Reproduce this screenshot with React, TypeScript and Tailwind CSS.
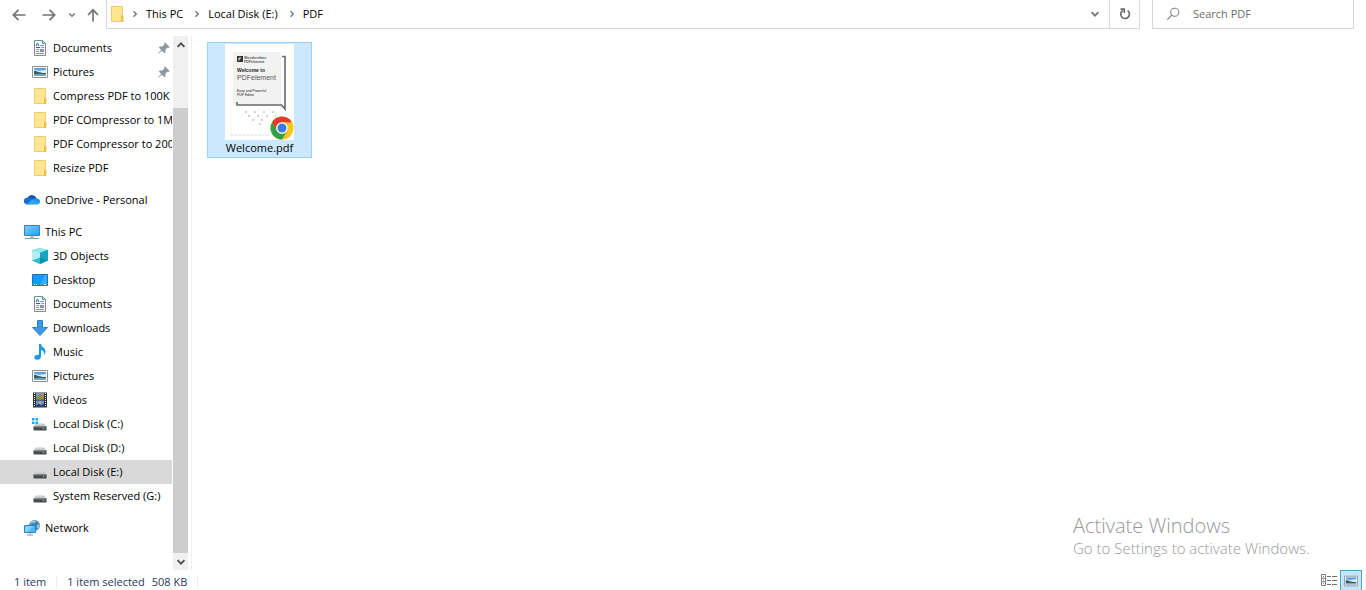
import React from "react";

type IconProps = { className?: string };

const Svg = ({ children, className = "size-4" }: { children: React.ReactNode; className?: string }) => (
  <svg viewBox="0 0 16 16" className={`shrink-0 ${className}`} aria-hidden="true">
    {children}
  </svg>
);

const FolderIcon = ({ className }: IconProps) => (
  <Svg className={className}>
    <path d="M2.500.5h11v15h-11z" fill="#fee591" stroke="#eccd74" />
    <path d="M12.500 15.500v-5c0-.8.3-1 .7-1s.8.2.8 1v5z" fill="#fbdc76" stroke="#e2b94c" />
  </Svg>
);

const DocumentIcon = () => (
  <Svg>
    <path d="M2.500.5h8l3 3v12h-11z" fill="#fcfdfd" stroke="#7f8b91" />
    <path d="M10.500.5v3h3" fill="none" stroke="#7f8b91" />
    <path d="M4 6l1.500-3L7 6M4 7.500h4" fill="none" stroke="#1f6f9c" />
    <path d="M8 5.500h4M9 7.500h3M4 9.500h3M4 11.500h3M4 13.500h8" fill="none" stroke="#4ab0d8" />
    <path d="M8 9h4v3H8z" fill="#5aa5c8" />
  </Svg>
);

const PictureIcon = ({ className }: IconProps) => (
  <Svg className={className}>
    <path d="M.5 2.500h15v11H.5z" fill="#fff" stroke="#8b9094" />
    <path d="M2 4h12v8H2z" fill="#9fcdf5" />
    <path d="M2 4h12v2L7 6.500 2 5z" fill="#5a9fe4" />
    <path d="M6 7l8-1v3H7z" fill="#d8edfb" />
    <path d="M2 7c3 0 5 2 12 2v1.500H2z" fill="#37635f" />
    <path d="M2 10.500h12V12H2z" fill="#77a7b6" />
  </Svg>
);

const CloudIcon = () => (
  <Svg className="h-4 w-4">
    <path d="M4 12.500a3.500 3.500 0 0 1-.5-6.800A5 5 0 0 1 12.600 6.500L8 12z" fill="#0d56ae" />
    <path d="M3.200 5.800c2-.7 4 .1 5.600 1.300L3 12.400A3.300 3.300 0 0 1 3.200 5.800z" fill="#1471cb" />
    <path d="M8.300 7.200c2-1.500 4.200-1 4.500-.6A3 3 0 0 1 15.600 11z" fill="#168ee2" />
    <path d="M2 12.200L8.200 7.200 15.600 10.500c0 1-.9 2-2.300 2H4c-.8 0-1.400 0-2-.3z" fill="#28a5ec" />
  </Svg>
);

const ComputerIcon = () => (
  <Svg>
    <defs>
      <linearGradient id="screen" x1="0" y1="0" x2="1" y2="1">
        <stop offset="0" stopColor="#82ceff" />
        <stop offset="1" stopColor="#269bf3" />
      </linearGradient>
    </defs>
    <path d="M.5 1.500h15v10H.5z" fill="url(#screen)" stroke="#3a83b6" />
    <path d="M6 12h4v2H6z" fill="#b7c8d1" />
    <path d="M1 14.500h14" stroke="#8399a6" />
  </Svg>
);

const CubeIcon = () => (
  <Svg>
    <path d="M8 0l8 2v10.500L8 16l-8-3.500V2z" fill="#56d4df" />
    <path d="M8 0l8 2-8 3-8-3z" fill="#8feaf0" />
    <path d="M0 2l8 3v5l-8 2.500z" fill="#b3eff0" />
    <path d="M0 12.500L8 9.500V16z" fill="#2fbccf" />
    <path d="M8 5l8-3v10.500L8 16z" fill="#0b8fab" />
    <path d="M8 5l8-3v10.500L8 9.500z" fill="#17a5c2" />
  </Svg>
);

const DesktopIcon = () => (
  <Svg>
    <path d="M.5 2.500h15v11H.5z" fill="#1799f8" stroke="#1174c4" />
    <path d="M8 13L13 3h2v10z" fill="#36adff" />
    <path d="M2 12.500h1M4 12.500h1M12 12.500h2" stroke="#d9f0ff" />
  </Svg>
);

const DownloadIcon = () => (
  <Svg>
    <path d="M5.500.5h5v7h5L8 15.500.5 7.500h5z" fill="#3d96e4" stroke="#2c7fcb" strokeLinejoin="round" />
  </Svg>
);

const MusicIcon = () => (
  <Svg>
    <path d="M7 0h2c.2 3 4.500 3.500 4.500 7.500 0 1.500-.7 2.800-1.500 3.500.6-3-.8-4.500-3-5v6.500c0 2-1.700 3.300-3.700 3.300S2.300 14.800 2.300 13.500c0-1.900 2.200-3.300 4.700-2.700z" fill="#1b97e3" />
  </Svg>
);

const VideoIcon = () => (
  <Svg>
    <path d="M1 .5h14v15H1z" fill="#30302f" />
    <path d="M4 1h8v6.500H4z" fill="#6ba0d0" />
    <path d="M4 8.500h8V15H4z" fill="#5b97e6" />
    <path d="M4 5.500l3-2 2 2 3-2v4H4z" fill="#7b9a36" />
    <path d="M7 2h3v3H7z" fill="#e2683c" />
    <path d="M4 13.500l3-2 2 2 3-2V15H4z" fill="#294568" />
    <path d="M7 9h2v3H7z" fill="#e5a64a" />
    <path d="M2.500 1v14M13.500 1v14" stroke="#fff" strokeDasharray="1 1" />
  </Svg>
);

const DiskBody = () => (
  <>
    <path d="M3.500 7.500h9l2 3.500h-13z" fill="#c9cccd" />
    <path d="M1.500 10.500h13v4h-13z" fill="#454a4c" />
    <path d="M1.500 10.500h13v1h-13z" fill="#777c7e" />
    <path d="M11 12.500h1" stroke="#8cf08e" />
  </>
);

const DiskIcon = () => (
  <Svg>
    <DiskBody />
  </Svg>
);

const SystemDiskIcon = () => (
  <Svg>
    <DiskBody />
    <path d="M0 2h2.500v2.500H0zM3.500 2H6v2.500H3.500zM0 5.500h2.500V8H0zM3.500 5.500H6V8H3.500z" fill="#19aeea" />
  </Svg>
);

const NetworkIcon = () => (
  <Svg>
    <circle cx="10.500" cy="5.500" r="5.400" fill="#3f86b4" />
    <path d="M6.500 2.500c1.500-2 4-2.300 5.500-1.500l-1.500 2-2.500-.2-1 1.700zM13 5l2.500-.5c.1 2.500-1 4-2.500 4.500z" fill="#9bcbe0" />
    <path d="M.5 5.500h11v7H.5z" fill="#50b5f5" stroke="#2d82bd" />
    <path d="M1 6h8l-5 6H1z" fill="#83d0fc" />
    <path d="M6 13v1.500M3 15h6" stroke="#7799ab" />
  </Svg>
);

const PinIcon = () => (
  <Svg className="size-3">
    <path d="M9.500.5l6 6-1.600 1.500-1.400-.4-2.700 2.700.3 3.200-1.500 1.400-3.300-3.300L1 15.300l-.6-.6 3.900-4.100L1 7.300l1.500-1.400 3.200.2 2.600-2.600L8 2z" fill="#8e979e" />
  </Svg>
);

const BackIcon = () => (
  <Svg>
    <path d="M14.500 8H2.500M7.500 2.800L2.300 8l5.200 5.200" fill="none" stroke="#747474" strokeWidth="1.700" />
  </Svg>
);

const ForwardIcon = () => (
  <Svg>
    <path d="M1.500 8h12M8.500 2.800L13.700 8l-5.200 5.200" fill="none" stroke="#747474" strokeWidth="1.700" />
  </Svg>
);

const UpIcon = () => (
  <Svg>
    <path d="M8 14.500V3M3 8l5-5.200L13 8" fill="none" stroke="#747474" strokeWidth="1.700" />
  </Svg>
);

const ChevronDown = ({ className }: IconProps) => (
  <Svg className={className}>
    <path d="M2.500 5L8 10.500 13.500 5" fill="none" stroke="currentColor" strokeWidth="3" />
  </Svg>
);

const ChevronUp = ({ className }: IconProps) => (
  <Svg className={className}>
    <path d="M2.500 11L8 5.500 13.500 11" fill="none" stroke="currentColor" strokeWidth="3" />
  </Svg>
);

const ChevronRight = () => (
  <Svg className="size-2 text-[#777]">
    <path d="M5 2.500L10.500 8 5 13.500" fill="none" stroke="currentColor" strokeWidth="2.800" />
  </Svg>
);

const RefreshIcon = () => (
  <Svg className="size-3">
    <path d="M11.500 3.500A5.800 5.800 0 1 1 5 3.300" fill="none" stroke="#6b6b6b" strokeWidth="2.200" />
    <path d="M2 1.500h5v5" fill="none" stroke="#6b6b6b" strokeWidth="2.200" />
  </Svg>
);

const SearchIcon = () => (
  <Svg className="size-[14px]">
    <circle cx="10" cy="6" r="4.600" fill="none" stroke="#777" strokeWidth="1.100" />
    <path d="M6.700 9.300L1.500 14.500" stroke="#777" strokeWidth="1.200" />
  </Svg>
);

const ChromeIcon = () => (
  <svg viewBox="0 0 48 48" className="absolute right-0 bottom-0 size-6" aria-hidden="true">
    <circle cx="24" cy="24" r="23" fill="#f8c61b" />
    <path d="M4.100 12.500A23 23 0 0 1 43.900 12.500H24A11.500 11.500 0 0 0 14 29.800z" fill="#e33b2e" />
    <path d="M4.100 12.500L14 29.800A11.500 11.500 0 0 0 34 29.800L24 47A23 23 0 0 1 4.100 12.500z" fill="#2da14c" />
    <circle cx="24" cy="24" r="11.500" fill="#fff" />
    <circle cx="24" cy="24" r="9" fill="#3a7bea" />
  </svg>
);

const DetailsViewIcon = () => (
  <Svg className="size-4">
    <path d="M.5 2.500h4v11h-4zM.5 6.200h4M.5 9.800h4" fill="none" stroke="#808080" />
    <path d="M2 4.500h1M2 8h1M2 11.700h1M6 4.500h4M11 4.500h5M6 8.500h4M11 8.500h5M6 12.500h4M11 12.500h5" stroke="#6f6f6f" />
  </Svg>
);

type Entry = { label: string; icon: React.ReactNode; pinned?: boolean; root?: boolean; selected?: boolean };

const groups: Entry[][] = [
  [
    { label: "Documents", icon: <DocumentIcon />, pinned: true },
    { label: "Pictures", icon: <PictureIcon />, pinned: true },
    { label: "Compress PDF to 100K", icon: <FolderIcon /> },
    { label: "PDF COmpressor to 1M", icon: <FolderIcon /> },
    { label: "PDF Compressor to 200", icon: <FolderIcon /> },
    { label: "Resize PDF", icon: <FolderIcon /> },
  ],
  [{ label: "OneDrive - Personal", icon: <CloudIcon />, root: true }],
  [
    { label: "This PC", icon: <ComputerIcon />, root: true },
    { label: "3D Objects", icon: <CubeIcon /> },
    { label: "Desktop", icon: <DesktopIcon /> },
    { label: "Documents", icon: <DocumentIcon /> },
    { label: "Downloads", icon: <DownloadIcon /> },
    { label: "Music", icon: <MusicIcon /> },
    { label: "Pictures", icon: <PictureIcon /> },
    { label: "Videos", icon: <VideoIcon /> },
    { label: "Local Disk (C:)", icon: <SystemDiskIcon /> },
    { label: "Local Disk (D:)", icon: <DiskIcon /> },
    { label: "Local Disk (E:)", icon: <DiskIcon />, selected: true },
    { label: "System Reserved (G:)", icon: <DiskIcon /> },
  ],
  [{ label: "Network", icon: <NetworkIcon />, root: true }],
];

const Row = ({ label, icon, pinned, root, selected }: Entry) => (
  <li>
    <a
      href="#"
      className={`flex h-6 items-center ${root ? "pl-6" : "pl-8"} ${selected ? "bg-[#d9d9d9]" : ""}`}
    >
      {icon}
      <span className="ml-[5px] min-w-0 flex-1 overflow-hidden whitespace-nowrap">{label}</span>
      {pinned && (
        <span className="pr-[2px]">
          <PinIcon />
        </span>
      )}
    </a>
  </li>
);

const TopBar = () => (
  <header className="flex h-[29px] shrink-0 pr-3">
    <nav aria-label="History" className="flex w-[106px] shrink-0 items-center pl-[11px]">
      <button type="button" aria-label="Back"><BackIcon /></button>
      <button type="button" aria-label="Forward" className="ml-[14px]"><ForwardIcon /></button>
      <button type="button" aria-label="Recent locations" className="ml-[11px] text-[#777]">
        <ChevronDown className="size-2" />
      </button>
      <button type="button" aria-label="Up" className="ml-[9px]"><UpIcon /></button>
    </nav>
    <div className="flex min-w-0 flex-1 border-x border-b border-[#d9d9d9]">
      <nav aria-label="Address" className="flex flex-1 items-center pl-[2px]">
        <FolderIcon />
        <ol className="flex items-center">
          {["This PC", "Local Disk (E:)", "PDF"].map((part) => (
            <li key={part} className="flex items-center">
              <span className="flex w-5 justify-center"><ChevronRight /></span>
              <a href="#" className="whitespace-nowrap pr-1 pl-px">{part}</a>
            </li>
          ))}
        </ol>
      </nav>
      <button type="button" aria-label="Previous locations" className="flex w-7 items-center justify-center text-[#777]">
        <ChevronDown className="size-[10px]" />
      </button>
      <button type="button" aria-label="Refresh" className="flex w-[30px] items-center justify-center border-l border-[#d9d9d9]">
        <RefreshIcon />
      </button>
    </div>
    <label className="ml-3 flex w-[202px] shrink-0 items-center border-x border-b border-[#d9d9d9] pl-[13px]">
      <SearchIcon />
      <input
        type="text"
        aria-label="Search PDF"
        placeholder="Search PDF"
        className="ml-[13px] w-full min-w-0 bg-transparent outline-none placeholder:text-[#6d6d6d]"
      />
    </label>
  </header>
);

const Scrollbar = () => (
  <div className="flex w-[15px] flex-col bg-[#f0f0f0] text-[#505050]">
    <button type="button" aria-label="Scroll up" className="flex h-[17px] items-center justify-center">
      <ChevronUp className="size-[10px]" />
    </button>
    <div className="flex flex-1 flex-col pt-[55px]">
      <div className="flex-1 bg-[#cdcdcd]" />
    </div>
    <button type="button" aria-label="Scroll down" className="flex h-[17px] items-center justify-center">
      <ChevronDown className="size-[10px]" />
    </button>
  </div>
);

const Thumbnail = () => (
  <div className="relative h-24 w-[69px] bg-white">
    <svg viewBox="0 0 69 96" className="h-full w-full" aria-hidden="true" fontFamily="Liberation Sans, sans-serif">
      <path d="M8 8h48v52H8z" fill="#f2f2f2" />
      <path d="M57 12.500h3V65l-3.500-4H12v-3" fill="none" stroke="#65686b" strokeWidth="1.600" />
      <path d="M12 12h6v6h-6z" fill="#333" />
      <path d="M14 16.500v-2.500h2" fill="none" stroke="#fff" />
      <text x="19" y="15" fontSize="3.500" fontWeight="700" fill="#555">Wondershare</text>
      <text x="19" y="18.500" fontSize="3.500" fontWeight="700" fill="#555">PDFelement</text>
      <text x="12" y="27.500" fontSize="5" fontWeight="700" fill="#222">Welcome to</text>
      <text x="12" y="36" fontSize="7" fill="#55585b">PDFelement</text>
      <text x="12" y="47.500" fontSize="3.500" fill="#222">Easy and Powerful</text>
      <text x="12" y="51.500" fontSize="3.500" fill="#222">PDF Editor</text>
      <path d="M20 68h31M23 72h28M27 76h18M34 80h3" stroke="#d0d0d0" strokeWidth="2" strokeDasharray="2 7" />
      <path d="M5 91h40" stroke="#dadada" strokeDasharray="3 1" />
    </svg>
    <ChromeIcon />
  </div>
);

export default function App() {
  return (
    <div className="relative flex min-h-screen flex-col overflow-hidden bg-white font-['Open_Sans','Noto_Sans',sans-serif] text-[11px] text-black">
      <TopBar />
      <div className="flex flex-1 pt-[7px]">
        <aside className="flex w-48 shrink-0 border-r border-[#f0f0f0]">
          <nav aria-label="Folders" className="mr-px flex w-[172px] flex-col gap-2">
            {groups.map((entries, i) => (
              <ul key={i}>
                {entries.map((entry) => (
                  <Row key={entry.label} {...entry} />
                ))}
              </ul>
            ))}
          </nav>
          <Scrollbar />
        </aside>
        <main className="min-w-0 flex-1 pt-[6px] pl-[15px]">
          <button
            type="button"
            className="flex w-[105px] flex-col items-center border border-[#99d1ff] bg-[#cce8ff] pt-px"
          >
            <Thumbnail />
            <span className="h-[17px] leading-4">Welcome.pdf</span>
          </button>
        </main>
      </div>
      <footer className="flex h-5 shrink-0 items-center justify-between pr-1 pl-[14px] text-[#1e395b]">
        <div className="flex items-center pt-1">
          <span>1 item</span>
          <span className="mx-[10px] h-3 w-px bg-[#ececec]" />
          <span>1 item selected</span>
          <span className="ml-[7px]">508 KB</span>
          <span className="ml-[10px] h-3 w-px bg-[#ececec]" />
        </div>
        <div className="flex h-full items-center gap-[3px]">
          <button type="button" aria-label="Details view"><DetailsViewIcon /></button>
          <button
            type="button"
            aria-label="Large icons view"
            className="flex h-full w-[22px] items-center justify-center border border-b-0 border-[#4ba3cd] bg-[#c4e6f8]"
          >
            <PictureIcon className="size-[14px]" />
          </button>
        </div>
      </footer>
      <div className="pointer-events-none absolute right-[57px] bottom-8 w-[236px] font-light whitespace-nowrap text-[#989898]">
        <p className="text-xl leading-6">Activate Windows</p>
        <p className="text-[15px] leading-5">Go to Settings to activate Windows.</p>
      </div>
    </div>
  );
}
